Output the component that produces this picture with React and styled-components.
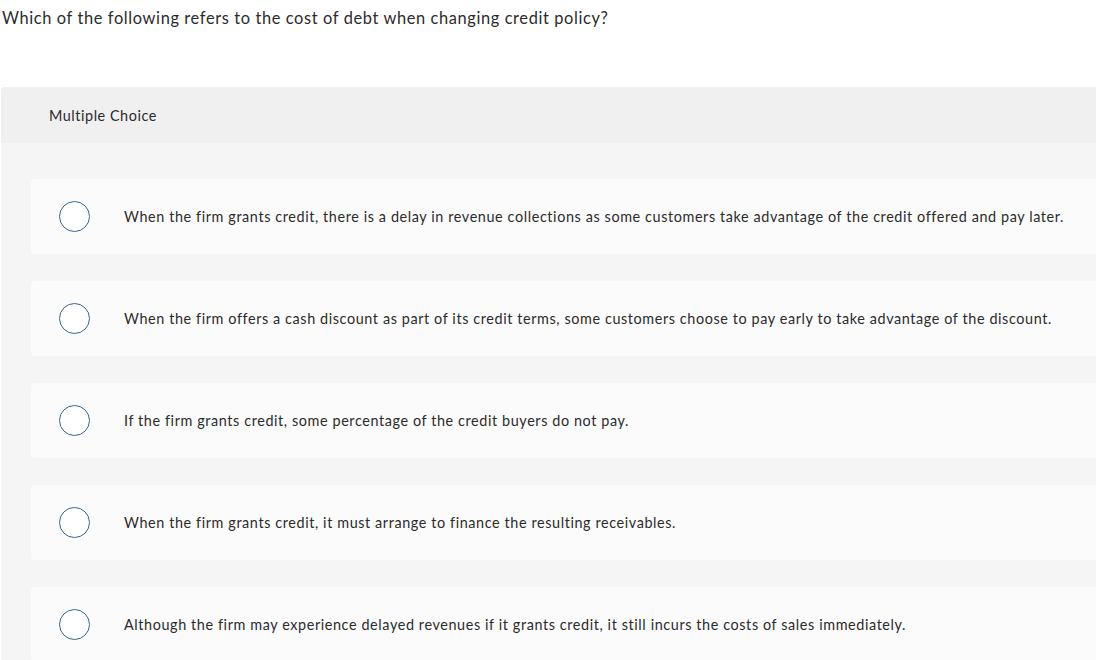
import React from "react";
import styled, { createGlobalStyle } from "styled-components";

const GlobalStyle = createGlobalStyle`
  html, body {
    margin: 0;
    padding: 0;
    background: #ffffff;
    font-family: "Lato", "Open Sans", "Liberation Sans", sans-serif;
    font-variant-ligatures: none;
    color: #333333;
  }
`;

const options = [
  "When the firm grants credit, there is a delay in revenue collections as some customers take advantage of the credit offered and pay later.",
  "When the firm offers a cash discount as part of its credit terms, some customers choose to pay early to take advantage of the discount.",
  "If the firm grants credit, some percentage of the credit buyers do not pay.",
  "When the firm grants credit, it must arrange to finance the resulting receivables.",
  "Although the firm may experience delayed revenues if it grants credit, it still incurs the costs of sales immediately.",
];

const Page = styled.div`
  width: 1096px;
  height: 660px;
  overflow: hidden;
`;

const Question = styled.p`
  margin: 0;
  padding: 8px 0 0 2px;
  height: 87px;
  box-sizing: border-box;
  font-size: 16.4px;
  line-height: 20px;
  letter-spacing: 0.62px;
  color: #2b2b2b;
`;

const Panel = styled.section`
  margin-left: 1px;
  background: #f5f5f5;
  border-radius: 4px 0 0 0;
  min-height: 580px;
`;

const PanelHeader = styled.div`
  height: 56px;
  display: flex;
  align-items: center;
  padding-left: 48px;
  background: #f0f0f0;
  border-radius: 4px 0 0 0;
  font-size: 14.4px;
  letter-spacing: 0.55px;
  color: #2b2b2b;
`;

const ChoiceList = styled.div`
  display: flex;
  flex-direction: column;
  gap: 27px;
  padding: 36px 0 0 30px;
`;

const Choice = styled.label`
  display: flex;
  align-items: center;
  height: 75px;
  padding-left: 28px;
  background: #fbfbfb;
  border-radius: 4px 0 0 4px;
  cursor: pointer;
`;

const Radio = styled.span`
  flex: none;
  width: 29px;
  height: 29px;
  border: 1.5px solid #3a6590;
  border-radius: 50%;
  background: #ffffff;
`;

const ChoiceText = styled.span`
  margin-left: 34px;
  font-size: 14.4px;
  letter-spacing: 0.6px;
  color: #2b2b2b;
  white-space: nowrap;
`;

export default function App() {
  return (
    <Page>
      <GlobalStyle />
      <Question>
        Which of the following refers to the cost of debt when changing credit policy?
      </Question>
      <Panel>
        <PanelHeader>Multiple Choice</PanelHeader>
        <ChoiceList>
          {options.map((text) => (
            <Choice key={text}>
              <Radio />
              <ChoiceText>{text}</ChoiceText>
            </Choice>
          ))}
        </ChoiceList>
      </Panel>
    </Page>
  );
}
